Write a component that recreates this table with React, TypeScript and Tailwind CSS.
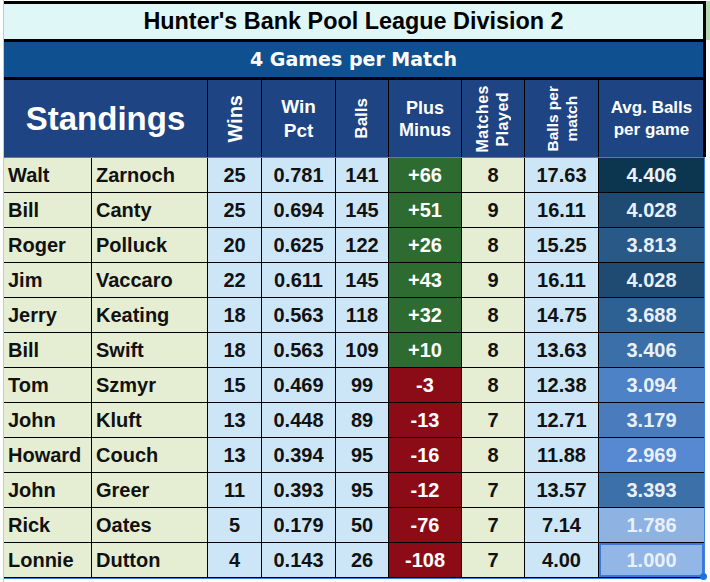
type Row = {
  first: string;
  last: string;
  wins: number;
  pct: string;
  balls: number;
  pm: string;
  played: number;
  bpm: string;
  avg: string;
  avgBg: string;
};

const ROWS: Row[] = [
  { first: "Walt", last: "Zarnoch", wins: 25, pct: "0.781", balls: 141, pm: "+66", played: 8, bpm: "17.63", avg: "4.406", avgBg: "bg-[#0c354f]" },
  { first: "Bill", last: "Canty", wins: 25, pct: "0.694", balls: 145, pm: "+51", played: 9, bpm: "16.11", avg: "4.028", avgBg: "bg-[#1f4b73]" },
  { first: "Roger", last: "Polluck", wins: 20, pct: "0.625", balls: 122, pm: "+26", played: 8, bpm: "15.25", avg: "3.813", avgBg: "bg-[#295987]" },
  { first: "Jim", last: "Vaccaro", wins: 22, pct: "0.611", balls: 145, pm: "+43", played: 9, bpm: "16.11", avg: "4.028", avgBg: "bg-[#1f4b73]" },
  { first: "Jerry", last: "Keating", wins: 18, pct: "0.563", balls: 118, pm: "+32", played: 8, bpm: "14.75", avg: "3.688", avgBg: "bg-[#2e6193]" },
  { first: "Bill", last: "Swift", wins: 18, pct: "0.563", balls: 109, pm: "+10", played: 8, bpm: "13.63", avg: "3.406", avgBg: "bg-[#3a6fa7]" },
  { first: "Tom", last: "Szmyr", wins: 15, pct: "0.469", balls: 99, pm: "-3", played: 8, bpm: "12.38", avg: "3.094", avgBg: "bg-[#4d82c6]" },
  { first: "John", last: "Kluft", wins: 13, pct: "0.448", balls: 89, pm: "-13", played: 7, bpm: "12.71", avg: "3.179", avgBg: "bg-[#4a7cbd]" },
  { first: "Howard", last: "Couch", wins: 13, pct: "0.394", balls: 95, pm: "-16", played: 8, bpm: "11.88", avg: "2.969", avgBg: "bg-[#5689d1]" },
  { first: "John", last: "Greer", wins: 11, pct: "0.393", balls: 95, pm: "-12", played: 7, bpm: "13.57", avg: "3.393", avgBg: "bg-[#3c70a9]" },
  { first: "Rick", last: "Oates", wins: 5, pct: "0.179", balls: 50, pm: "-76", played: 7, bpm: "7.14", avg: "1.786", avgBg: "bg-[#8eb3e2]" },
  { first: "Lonnie", last: "Dutton", wins: 4, pct: "0.143", balls: 26, pm: "-108", played: 7, bpm: "4.00", avg: "1.000", avgBg: "bg-[#92b6e5]" },
];

const COLS = "grid grid-cols-[88px_116px_54px_74px_53px_73px_63px_74px_105px]";
const font = "font-['Liberation_Sans',Arial,sans-serif]";

// rotated header text, reads bottom to top
function Vertical({ lines, size }: { lines: string[]; size: string }) {
  return (
    <div className="flex h-full items-center justify-center border-r border-black">
      <div className={`rotate-180 text-center [writing-mode:vertical-rl] ${size}`}>
        {lines.map((l) => (
          <div key={l}>{l}</div>
        ))}
      </div>
    </div>
  );
}

function Stacked({ lines, size }: { lines: string[]; size: string }) {
  return (
    <div className={`flex h-full flex-col items-center justify-center border-r border-black ${size}`}>
      {lines.map((l) => (
        <div key={l}>{l}</div>
      ))}
    </div>
  );
}

export default function App() {
  return (
    <div className={`flex h-[582px] w-[710px] flex-col overflow-hidden bg-white ${font} font-bold`}>
      <div className="ml-[3px] flex w-[707px] flex-col border-l border-[#c8c8c8] pt-[1px]">
        {/* title */}
        <div className="flex">
          <div className="flex h-[41px] w-[702px] items-center justify-center border-y-[3px] border-r-[3px] border-black bg-[#e0f7f7] text-[23.4px] text-black">
            Hunter's Bank Pool League Division 2
          </div>
          <div className="h-[39px] w-[4px] bg-[#b5dcb0]" />
        </div>
        {/* subtitle */}
        <div className="flex h-[38px] w-[702px] items-center justify-center border-b-[3px] border-r-[3px] border-black bg-[#0e5090] font-['DejaVu_Sans',Verdana,sans-serif] text-[19px] text-white">
          4 Games per Match
        </div>
        {/* header */}
        <div className={`${COLS} h-[77px] w-[702px] border-r-[3px] border-black bg-[#1e4483] text-white`}>
          <div className="col-span-2 flex items-center justify-center border-r border-black text-[33px]">
            Standings
          </div>
          <Vertical lines={["Wins"]} size="text-[20px] leading-[22px]" />
          <Stacked lines={["Win", "Pct"]} size="text-[19px] leading-[24px]" />
          <Vertical lines={["Balls"]} size="text-[17px] leading-[20px]" />
          <Stacked lines={["Plus", "Minus"]} size="text-[18px] leading-[22px]" />
          <Vertical lines={["Matches", "Played"]} size="text-[16px] leading-[20px] tracking-[0.5px]" />
          <Vertical lines={["Balls per", "match"]} size="text-[15.5px] leading-[19px]" />
          <div className="flex flex-col items-center justify-center text-[17px] leading-[22px]">
            <div>Avg. Balls</div>
            <div>per game</div>
          </div>
        </div>
        {/* data */}
        <div className="w-[701px] border-y border-r border-[#3f7fe0] text-[20px] text-[#111]">
          {ROWS.map((r, i) => {
            const last = i === ROWS.length - 1;
            return (
              <div key={i} className={`${COLS} h-[35px] border-b border-black`}>
                <div className="flex items-center border-r border-black bg-[#e5eed3] pl-[4px]">{r.first}</div>
                <div className="flex items-center border-r border-black bg-[#e5eed3] pl-[4px]">{r.last}</div>
                <div className="flex items-center justify-center border-r border-black bg-[#cde6f7]">{r.wins}</div>
                <div className="flex items-center justify-center border-r border-black bg-[#cde6f7]">{r.pct}</div>
                <div className="flex items-center justify-center border-r border-black bg-[#cde6f7]">{r.balls}</div>
                <div
                  className={`flex items-center justify-center border-r border-black text-white ${
                    r.pm.startsWith("+") ? "bg-[#2e6b30]" : "bg-[#8b0b17]"
                  }`}
                >
                  {r.pm}
                </div>
                <div className="flex items-center justify-center border-r border-black bg-[#e5eed3]">{r.played}</div>
                <div className="flex items-center justify-center border-r border-black bg-[#cde6f7]">{r.bpm}</div>
                <div
                  className={`relative flex items-center justify-center text-[#eaf0fa] ${r.avgBg} ${
                    last ? "border-2 border-[#3b78dc]" : ""
                  }`}
                >
                  {r.avg}
                  {last && (
                    <div className="absolute -bottom-[5px] -right-[5px] h-[7px] w-[7px] rounded-full bg-[#1f6fe0]" />
                  )}
                </div>
              </div>
            );
          })}
        </div>
        <div className="h-[3px]" />
        <div className="border-t border-[#d0d0d0]" />
      </div>
    </div>
  );
}
